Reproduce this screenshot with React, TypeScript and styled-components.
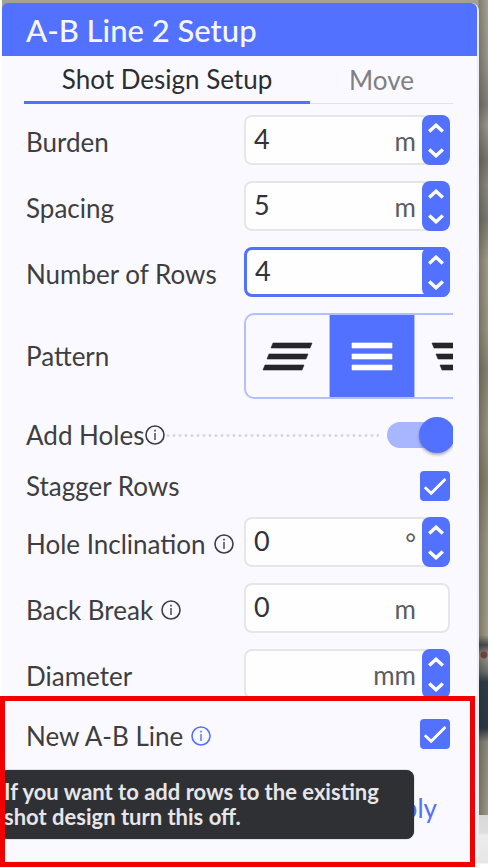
import React, { useId, useState } from "react";
import styled, { createGlobalStyle, css } from "styled-components";

const blue = "#5271ff";
const ink = "#3e3e41";
const surface = "#faf9ff";

const GlobalStyle = createGlobalStyle`
  *, *::before, *::after { box-sizing: border-box; }
  body { margin: 0; background: #ffffff; }
  body, button, input { font-family: Lato, "Open Sans", sans-serif; }
`;

const Backdrop = styled.main`
  position: relative;
  min-height: 100vh;
  padding: 3px 9px 5px 2px;
  overflow: hidden;
  background:
    linear-gradient(#ffffff, #ffffff) left / 2px 100% no-repeat,
    linear-gradient(90deg, transparent calc(100% - 10px), rgba(40, 40, 34, 0.3) calc(100% - 9px), transparent) 0 0 / 100% 815px no-repeat,
    radial-gradient(circle at calc(100% - 4px) 655px, #7c4448 0 3px, transparent 4px) no-repeat,
    linear-gradient(
      180deg,
      #a5a193 0,
      #98958a 60px,
      #807d75 105px,
      #99968c 125px,
      #77756c 160px,
      #8b887d 185px,
      #787970 220px,
      #a19a87 260px,
      #999480 330px,
      #858170 370px,
      #99927f 430px,
      #87816f 480px,
      #9c9582 540px,
      #a39b87 635px,
      #474c4d 645px,
      #a0988a 655px,
      #68706c 672px,
      #2d3b48 682px,
      #293746 728px,
      #8b887a 742px,
      #9c9684 814px,
      #9c9684 815px
    ) 0 0 / 100% 815px no-repeat,
    linear-gradient(#d7d7d5 815px, #dededd 833px, #ececeb 835px, #e6e6e5 863px, #ffffff 864px);
`;

const Panel = styled.section`
  position: relative;
  border: solid #eeeef0;
  border-width: 0 2px 1px 0;
  border-radius: 8px 8px 8px 0;
  background: ${surface};
`;

const Header = styled.h1`
  margin: 0;
  padding: 1px 24px 0;
  border-radius: 6px 6px 0 0;
  background: ${blue};
  color: #f6f6ff;
  font-size: 31px;
  font-weight: 500;
  line-height: 52px;
`;

const Content = styled.div`
  margin: 0 24px 0 22px;
  overflow: hidden;
`;

const Tabs = styled.div`
  display: grid;
  grid-template-columns: 2fr 1fr;
`;

const Tab = styled.button<{ $active?: boolean }>`
  height: 48px;
  padding: 0;
  border: solid ${(p) => (p.$active ? blue : "#e2e2ea")};
  border-width: 0 0 ${(p) => (p.$active ? 3 : 1)}px;
  background: none;
  color: ${(p) => (p.$active ? "#2c2d31" : "#808084")};
  font-size: 26px;
  line-height: 44px;
`;

const Form = styled.form`
  display: flex;
  flex-direction: column;
  gap: 16px;
  padding: 11px 3px 0 2px;
`;

const Row = styled.div<{ $height?: number }>`
  position: relative;
  display: grid;
  grid-template-columns: 218px minmax(0, 1fr);
  align-items: center;
  min-height: ${(p) => p.$height ?? 50}px;
`;

const SplitRow = styled(Row)`
  grid-template-columns: auto minmax(0, 1fr) auto;
`;

const Caption = styled.div<{ $gap?: number; $compact?: boolean }>`
  display: flex;
  align-items: center;
  gap: ${(p) => p.$gap ?? 8}px;
  padding-top: ${(p) => (p.$compact ? 0 : 4)}px;
  color: ${ink};
  font-size: 26px;
  line-height: 30px;
  white-space: nowrap;
`;

const InfoButton = styled.button<{ $active?: boolean }>`
  display: flex;
  padding: 0;
  border: 0;
  background: none;
  color: ${(p) => (p.$active ? blue : ink)};
`;

const Field = styled.div<{ $focused?: boolean }>`
  display: flex;
  height: 50px;
  overflow: hidden;
  border: 2px solid #e6e6e8;
  border-radius: 8px;
  background: #fefefe;
  ${(p) => p.$focused && css`border: 3px solid ${blue};`}
`;

const FieldWrap = styled.div`
  display: grid;
  grid-template-columns: minmax(0, 1fr) 28px;
  > * { grid-row: 1; }
  > ${Field} { grid-column: 1 / 3; }
`;

const NumberInput = styled.input`
  flex: 1;
  min-width: 0;
  padding: 0 0 4px 8px;
  border: 0;
  outline: 0;
  background: none;
  color: #323337;
  font-size: 27px;
`;

const Unit = styled.span`
  padding-right: 32px;
  color: #5b5c62;
  font-size: 26px;
  line-height: 48px;
`;

const Stepper = styled.div`
  z-index: 1;
  grid-column: 2;
  display: grid;
  grid-template-rows: 1fr 1fr;
  border-radius: 8px;
  background: ${blue};
`;

const StepButton = styled.button`
  display: flex;
  align-items: center;
  justify-content: center;
  padding: 0;
  border: 0;
  background: none;
  color: #ffffff;
`;

const PatternGroup = styled.div`
  display: flex;
  width: 256px;
  height: 86px;
  border: 2px solid #b3c0ff;
  border-radius: 10px;
`;

const PatternButton = styled.button<{ $active?: boolean }>`
  display: flex;
  flex: 1;
  align-items: center;
  justify-content: center;
  padding: 0;
  border: 0;
  background: ${(p) => (p.$active ? blue : "transparent")};
  color: ${(p) => (p.$active ? "#ffffff" : "#252629")};
  & + & { border-left: 1px solid #b3c0ff; }
`;

const Leader = styled.span`
  height: 3px;
  margin-right: 8px;
  background: radial-gradient(circle, #d9d9df 0 1px, transparent 2px) 0 0 / 6px 3px repeat-x;
`;

const Switch = styled.input`
  display: flex;
  align-items: center;
  justify-content: flex-end;
  width: 68px;
  height: 26px;
  margin: 0 -5px 0 0;
  appearance: none;
  border-radius: 13px;
  background: #a8b6ff;
  &::before {
    content: "";
    width: 36px;
    height: 36px;
    flex: none;
    border-radius: 50%;
    background: ${blue};
    box-shadow: 0 2px 3px rgba(30, 30, 60, 0.35);
  }
  &:not(:checked) { justify-content: flex-start; }
`;

const TickBox = styled.span`
  display: grid;
  grid-column: 3;
  width: 30px;
  height: 30px;
  > * { grid-area: 1 / 1; }
  svg { pointer-events: none; }
`;

const TickInput = styled.input`
  width: 30px;
  height: 30px;
  margin: 0;
  appearance: none;
  border: 2px solid ${blue};
  border-radius: 4px;
  &:checked { background: ${blue}; }
`;

const Tooltip = styled.div`
  position: absolute;
  z-index: 2;
  top: 55px;
  left: -26px;
  width: 414px;
  padding: 9px 4px 10px;
  border-radius: 8px;
  background: #2f3033;
  color: #e6e6ea;
  box-shadow: 0 0 1px #2f3033;
  font-size: 22px;
  font-weight: 700;
  line-height: 25px;
`;

const NewLineWrap = styled.div`
  padding: 16px 27px 0 24px;
`;

const Footer = styled.footer`
  display: flex;
  justify-content: flex-end;
  padding: 36px 40px 34px;
`;

const ApplyButton = styled.button`
  padding: 0;
  border: 0;
  background: none;
  color: ${blue};
  font-size: 26px;
  line-height: 38px;
`;

const Highlight = styled.div`
  position: absolute;
  z-index: 3;
  right: 2px;
  bottom: -6px;
  left: -2px;
  height: 171px;
  border: 5px solid #f00000;
  pointer-events: none;
`;

function InfoIcon() {
  return (
    <svg width="20" height="20" viewBox="0 0 20 20" fill="none" stroke="currentColor" aria-hidden="true">
      <circle cx="10" cy="10" r="9" strokeWidth="1.6" />
      <path d="M10 8v7" strokeWidth="1.4" />
      <path d="M10 4.7v1.8" strokeWidth="1.6" />
    </svg>
  );
}

function Chevron({ down }: { down?: boolean }) {
  return (
    <svg width="16" height="10" viewBox="0 0 16 10" fill="none" stroke="currentColor" strokeWidth="3.4" aria-hidden="true">
      <path d={down ? "M1.2 1.6 8 7.8l6.8-6.2" : "M1.2 8.4 8 2.2l6.8 6.2"} />
    </svg>
  );
}

const patternPaths: Record<string, string> = {
  "Slant right": "M9 0h39l-2 5H7zM5 11h39l-2 5H3zM1 22h39l-2 5H-1z",
  Straight: "M4 0h40v5H4zM4 11h40v5H4zM4 22h40v5H4z",
  "Slant left": "M0 0h39l2 5H2zM4 11h39l2 5H6zM8 22h39l2 5H10z",
};

function PatternIcon({ name }: { name: string }) {
  return (
    <svg width="48" height="27" viewBox="0 0 48 27" fill="currentColor" stroke="currentColor" strokeWidth="0.6" strokeLinejoin="round" overflow="visible" aria-hidden="true">
      <path d={patternPaths[name]} />
    </svg>
  );
}

interface NumberRowProps {
  label: string;
  value: string;
  unit?: string;
  info?: boolean;
  stepper?: boolean;
  focused?: boolean;
}

function NumberRow({ label, value, unit, info, stepper = true, focused }: NumberRowProps) {
  const id = useId();
  const [text, setText] = useState(value);
  const step = (by: number) => setText(String(Number(text) + by));
  return (
    <Row>
      <Caption>
        <label htmlFor={id}>{label}</label>
        {info && <InfoButton type="button" aria-label={`About ${label}`}><InfoIcon /></InfoButton>}
      </Caption>
      <FieldWrap>
        <Field $focused={focused}>
          <NumberInput id={id} inputMode="decimal" value={text} onChange={(e) => setText(e.target.value)} />
          {unit && <Unit>{unit}</Unit>}
        </Field>
        {stepper && (
          <Stepper>
            <StepButton type="button" aria-label={`Increase ${label}`} onClick={() => step(1)}><Chevron /></StepButton>
            <StepButton type="button" aria-label={`Decrease ${label}`} onClick={() => step(-1)}><Chevron down /></StepButton>
          </Stepper>
        )}
      </FieldWrap>
    </Row>
  );
}

function Tick({ id }: { id: string }) {
  return (
    <TickBox>
      <TickInput id={id} type="checkbox" defaultChecked />
      <svg width="30" height="30" viewBox="0 0 30 30" fill="none" stroke="#ffffff" strokeWidth="2.8" aria-hidden="true">
        <path d="M4.8 16.2 11.2 22.3 25.4 8" />
      </svg>
    </TickBox>
  );
}

function NewLineSection() {
  return (
    <NewLineWrap>
      <SplitRow $height={38}>
        <Caption>
          <label htmlFor="new-line">New A-B Line</label>
          <InfoButton type="button" $active aria-label="About New A-B Line" aria-describedby="new-line-tip">
            <InfoIcon />
          </InfoButton>
        </Caption>
        <Tick id="new-line" />
        <Tooltip id="new-line-tip" role="tooltip">
          If you want to add rows to the existing shot design turn this off.
        </Tooltip>
      </SplitRow>
    </NewLineWrap>
  );
}

export default function App() {
  const [pattern, setPattern] = useState("Straight");
  return (
    <>
      <GlobalStyle />
      <Backdrop>
        <Panel>
          <Header>A-B Line 2 Setup</Header>
          <Content>
            <Tabs role="tablist">
              <Tab type="button" role="tab" aria-selected $active>Shot Design Setup</Tab>
              <Tab type="button" role="tab" aria-selected={false}>Move</Tab>
            </Tabs>
            <Form id="setup" onSubmit={(e) => e.preventDefault()}>
              <NumberRow label="Burden" value="4" unit="m" />
              <NumberRow label="Spacing" value="5" unit="m" />
              <NumberRow label="Number of Rows" value="4" focused />
              <Row $height={86}>
                <Caption $compact>Pattern</Caption>
                <PatternGroup role="group" aria-label="Pattern">
                  {Object.keys(patternPaths).map((name) => (
                    <PatternButton
                      key={name}
                      type="button"
                      aria-label={name}
                      aria-pressed={pattern === name}
                      $active={pattern === name}
                      onClick={() => setPattern(name)}
                    >
                      <PatternIcon name={name} />
                    </PatternButton>
                  ))}
                </PatternGroup>
              </Row>
              <SplitRow $height={40}>
                <Caption $gap={1} $compact>
                  <label htmlFor="add-holes">Add Holes</label>
                  <InfoButton type="button" aria-label="About Add Holes"><InfoIcon /></InfoButton>
                </Caption>
                <Leader />
                <Switch id="add-holes" type="checkbox" role="switch" defaultChecked />
              </SplitRow>
              <SplitRow $height={30}>
                <Caption $compact><label htmlFor="stagger">Stagger Rows</label></Caption>
                <Tick id="stagger" />
              </SplitRow>
              <NumberRow label="Hole Inclination" value="0" unit="°" info />
              <NumberRow label="Back Break" value="0" unit="m" info stepper={false} />
              <NumberRow label="Diameter" value="" unit="mm" />
            </Form>
          </Content>
          <NewLineSection />
          <Footer>
            <ApplyButton type="submit" form="setup">Apply</ApplyButton>
          </Footer>
          <Highlight />
        </Panel>
      </Backdrop>
    </>
  );
}
